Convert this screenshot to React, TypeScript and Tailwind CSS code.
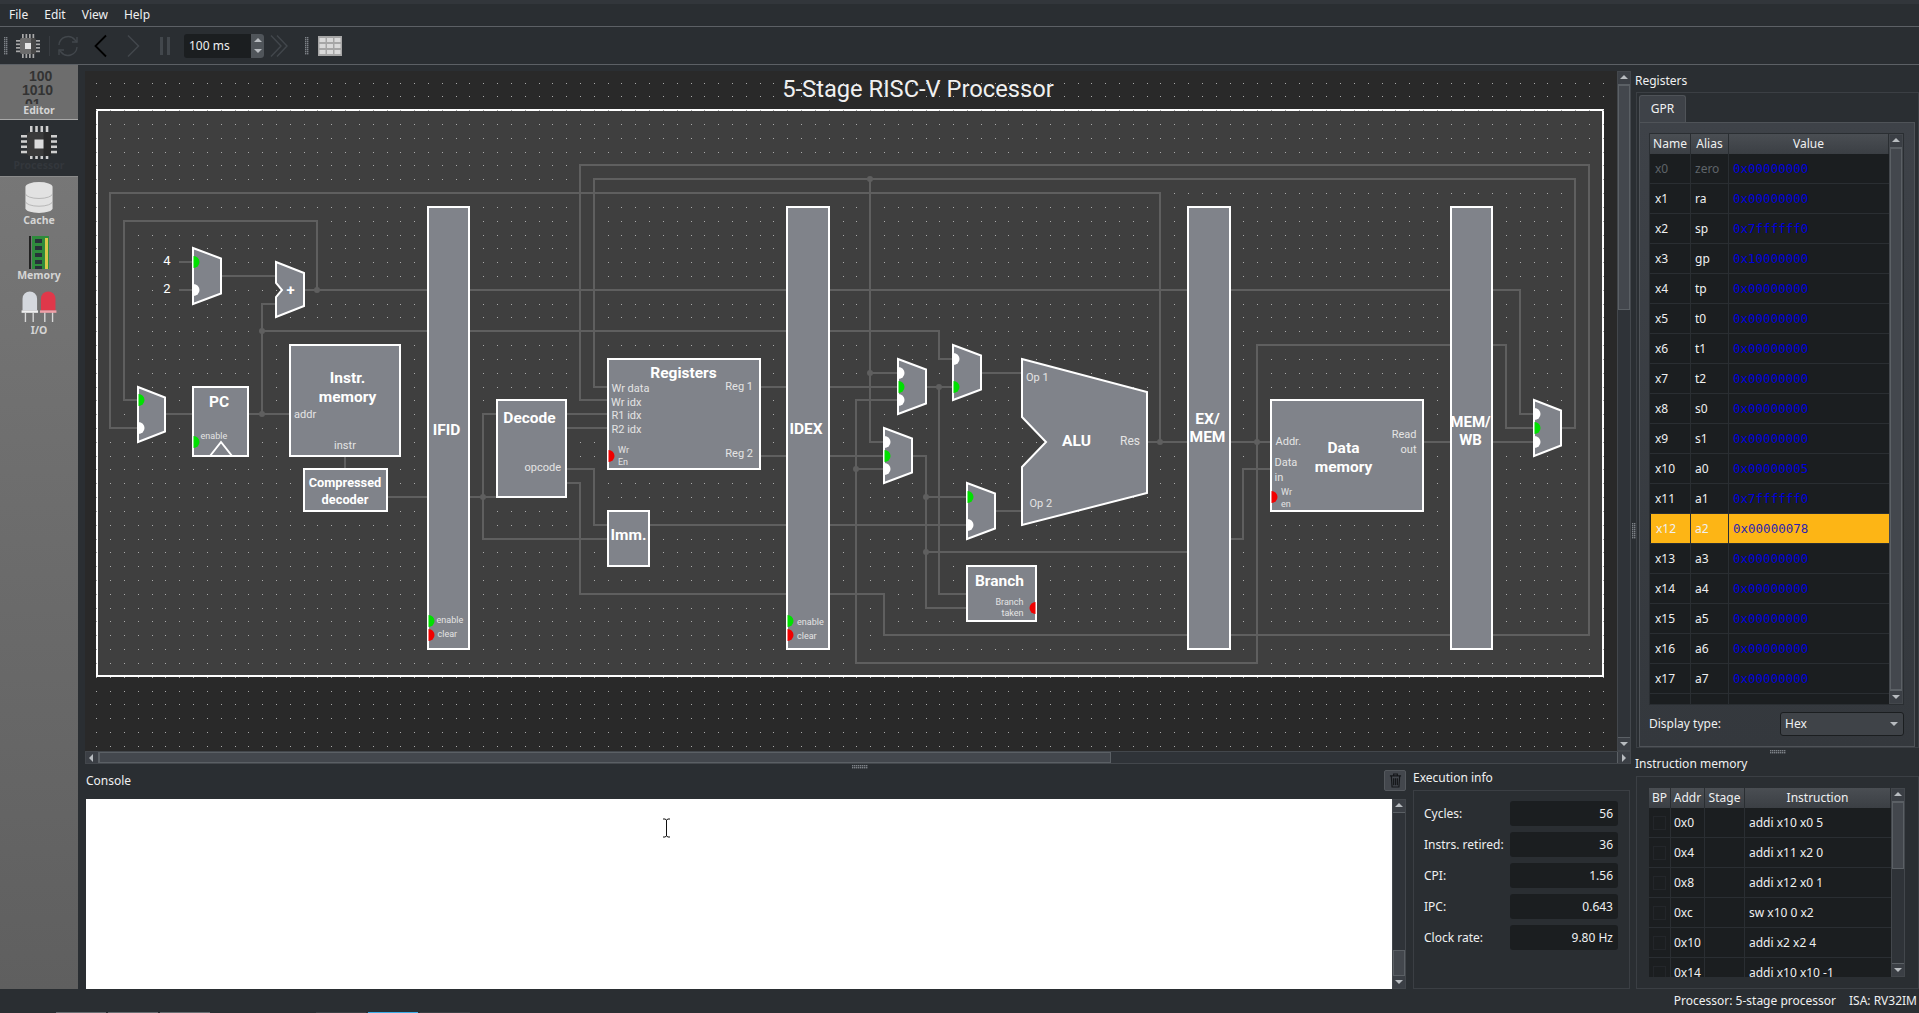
import { ReactNode } from "react";

// grid of the processor diagram, everything in it snaps to this
const X = (j: number) => Math.round(96.3 + 13.82 * j);
const Y = (k: number) => Math.round(82.5 + 13.82 * k);

const WIRE = "#5f5f5f";
const BLOCK = "#80838a";

const wires: number[][][] = [
  [[3, 25], [1, 25], [1, 8], [77, 8], [77, 26]],
  [[3, 23], [2, 23], [2, 10], [16, 10], [16, 15]],
  [[15, 15], [103, 15], [103, 24], [104, 24]],
  [[12, 18], [61, 18], [61, 20], [62, 20]],
  [[13, 16], [12, 16], [12, 24]],
  [[11, 24], [14, 24]],
  [[5, 24], [7, 24]],
  [[9, 14], [13, 14]],
  [[6, 13], [7, 13]],
  [[6, 15], [7, 15]],
  [[18, 27], [18, 28]],
  [[21, 30], [29, 30]],
  [[29, 24], [28, 24], [28, 33], [37, 33]],
  [[34, 24], [37, 24]],
  [[34, 25], [37, 25]],
  [[34, 28], [36, 28], [36, 32], [37, 32]],
  [[34, 29], [35, 29], [35, 37], [57, 37], [57, 40], [108, 40], [108, 6], [35, 6], [35, 23], [37, 23]],
  [[37, 22], [36, 22], [36, 7], [107, 7], [107, 25], [106, 25]],
  [[48, 22], [58, 22]],
  [[48, 27], [57, 27]],
  [[40, 32], [63, 32]],
  [[56, 7], [56, 26], [57, 26]],
  [[56, 21], [58, 21]],
  [[58, 23], [55, 23], [55, 42], [84, 42], [84, 19], [102, 19], [102, 25], [104, 25]],
  [[55, 28], [57, 28]],
  [[60, 22], [62, 22]],
  [[61, 22], [61, 37], [63, 37]],
  [[59, 27], [60, 27], [60, 38], [63, 38]],
  [[60, 30], [63, 30]],
  [[60, 34], [79, 34]],
  [[64, 21], [67, 21]],
  [[65, 31], [67, 31]],
  [[76, 26], [85, 26]],
  [[96, 26], [104, 26]],
  [[82, 33], [83, 33], [83, 28], [85, 28]],
];

const junctions = [
  [16, 15], [12, 18], [12, 24], [28, 30], [56, 7], [56, 21],
  [55, 28], [61, 22], [60, 30], [60, 34], [77, 26], [84, 26],
];

// [j, k, [port rows], green port row]
const muxes: [number, number, number[], number][] = [
  [7, 12, [13, 15], 13],
  [3, 22, [23, 25], 23],
  [58, 20, [21, 22, 23], 22],
  [57, 25, [26, 27, 28], 27],
  [62, 19, [20, 22], 22],
  [63, 29, [30, 32], 30],
  [104, 23, [24, 25, 26], 25],
];

// [j0, k0, j1, k1]
const blocks = [
  [7, 22, 11, 27],
  [14, 19, 22, 27],
  [15, 28, 21, 31],
  [24, 9, 27, 41],
  [29, 23, 34, 30],
  [37, 20, 48, 28],
  [37, 31, 40, 35],
  [50, 9, 53, 41],
  [63, 35, 68, 39],
  [79, 9, 82, 41],
  [85, 23, 96, 31],
  [98, 9, 101, 41],
];

const dotsPath = () => {
  let d = "";
  for (let j = 0; j <= 109; j++) {
    for (let k = 0; k <= 48; k++) {
      d += `M${X(j)} ${Y(k)}h1v1h-1z`;
    }
  }
  return d;
};

function Port({ j, k, color, flip }: { j: number; k: number; color: string; flip?: boolean }) {
  const x = X(j) + (flip ? -0.5 : 0.5);
  const y = Y(k);
  return <path d={`M${x} ${y - 6}A6 6 0 0 ${flip ? 0 : 1} ${x} ${y + 6}Z`} fill={color} />;
}

function T({
  x,
  y,
  size = 11,
  bold,
  anchor = "start",
  fill = "#e4e4e4",
  children,
}: {
  x: number;
  y: number;
  size?: number;
  bold?: boolean;
  anchor?: "start" | "middle" | "end";
  fill?: string;
  children: ReactNode;
}) {
  return (
    <text x={x} y={y + 1} fontSize={size} fontWeight={bold ? 700 : 400} textAnchor={anchor} dominantBaseline="middle" fill={fill}>
      {children}
    </text>
  );
}

const Title = (p: { x: number; y: number; children: ReactNode; size?: number }) => (
  <T x={p.x} y={p.y} size={p.size ?? 15.5} bold anchor="middle" fill="#fff">
    {p.children}
  </T>
);

function Diagram() {
  const white = "#fff";
  return (
    <svg viewBox="85 71 1532 680" className="block w-[1532px] h-[680px] bg-[#292929] font-['Roboto',sans-serif]">
      <rect x="97" y="110" width="1506" height="566" fill="#3f3f3f" stroke="#fff" strokeWidth="2" />
      <path d={dotsPath()} fill="#aaaaaa" shapeRendering="crispEdges" />
      <T x={918} y={90} size={23.7} anchor="middle" fill="#f0f0f0">
        5-Stage RISC-V Processor
      </T>

      {wires.map((w, i) => (
        <polyline key={i} points={w.map(([j, k]) => `${X(j)},${Y(k)}`).join(" ")} fill="none" stroke={WIRE} strokeWidth="2" />
      ))}
      {junctions.map(([j, k]) => (
        <circle key={`${j}-${k}`} cx={X(j)} cy={Y(k)} r="3" fill={WIRE} />
      ))}

      {blocks.map(([a, b, c, d]) => (
        <rect key={`${a}-${b}`} x={X(a)} y={Y(b)} width={X(c) - X(a)} height={Y(d) - Y(b)} fill={BLOCK} stroke={white} strokeWidth="2" />
      ))}
      {muxes.map(([j, k, ports, green]) => (
        <g key={`${j}-${k}`}>
          <polygon
            points={`${X(j)},${Y(k)} ${X(j + 2)},${Y(k) + 10.5} ${X(j + 2)},${Y(k + 4) - 10.5} ${X(j)},${Y(k + 4)}`}
            fill={BLOCK}
            stroke={white}
            strokeWidth="2"
          />
          {ports.map((p) => (
            <Port key={p} j={j} k={p} color={p === green ? "#00e000" : "#fff"} />
          ))}
        </g>
      ))}
      {/* pc adder */}
      <polygon
        points={`${X(13)},${Y(13)} ${X(15)},${Y(13) + 11} ${X(15)},${Y(17) - 11} ${X(13)},${Y(17)} ${X(13)},${Y(15.5)} ${X(13.45)},${Y(15)} ${X(13)},${Y(14.5)}`}
        fill={BLOCK}
        stroke={white}
        strokeWidth="2"
      />
      {/* alu */}
      <polygon
        points={`${X(67)},${Y(20)} ${X(76)},${Y(22.4)} ${X(76)},${Y(29.7)} ${X(67)},${Y(32)} ${X(67)},${Y(27.8)} ${X(68.75)},${Y(26)} ${X(67)},${Y(24.2)}`}
        fill={BLOCK}
        stroke={white}
        strokeWidth="2"
      />
      {/* clock mark of the pc */}
      <polygon points={`${X(9) - 11},${Y(27)} ${X(9)},${Y(26)} ${X(9) + 11},${Y(27)}`} fill="none" stroke={white} strokeWidth="2" />

      <Port j={7} k={26} color="#00e000" />
      <Port j={24} k={39} color="#00e000" />
      <Port j={24} k={40} color="#f00000" />
      <Port j={50} k={39} color="#00e000" />
      <Port j={50} k={40} color="#f00000" />
      <Port j={37} k={27} color="#f00000" />
      <Port j={85} k={30} color="#f00000" />
      <Port j={68} k={38} color="#f00000" flip />

      <T x={167} y={261} size={13} anchor="middle" fill="#fff">4</T>
      <T x={167} y={289} size={13} anchor="middle" fill="#fff">2</T>
      <T x={290.5} y={290} size={15} bold anchor="middle" fill="#fff">+</T>
      <Title x={219} y={402}>PC</Title>
      <T x={200.5} y={435.5} size={9}>enable</T>
      <Title x={347.5} y={378}>Instr.</Title>
      <Title x={347.5} y={397}>memory</Title>
      <T x={294} y={414} size={11}>addr</T>
      <T x={345} y={445} size={11} anchor="middle">instr</T>
      <Title x={345} y={482.5} size={12.8}>Compressed</Title>
      <Title x={345} y={499.5} size={12.8}>decoder</Title>

      <Title x={446.5} y={430}>IFID</Title>
      <T x={436.5} y={620} size={9}>enable</T>
      <T x={437.5} y={634} size={9}>clear</T>

      <Title x={529.5} y={418}>Decode</Title>
      <T x={561} y={467} size={11} anchor="end">opcode</T>

      <Title x={683.5} y={373}>Registers</Title>
      <T x={611.5} y={388}>Wr data</T>
      <T x={611} y={402}>Wr idx</T>
      <T x={611.5} y={415}>R1 idx</T>
      <T x={611.5} y={429}>R2 idx</T>
      <T x={753} y={386} anchor="end">Reg 1</T>
      <T x={753} y={453} anchor="end">Reg 2</T>
      <T x={618} y={450} size={9}>Wr</T>
      <T x={618} y={461.5} size={9}>En</T>

      <Title x={628.5} y={534.5}>Imm.</Title>

      <Title x={806} y={429}>IDEX</Title>
      <T x={797} y={622} size={9}>enable</T>
      <T x={797} y={636} size={9}>clear</T>

      <T x={1026} y={377.5}>Op 1</T>
      <T x={1029.5} y={503.5}>Op 2</T>
      <Title x={1076.5} y={441}>ALU</Title>
      <T x={1140} y={441} size={12} anchor="end">Res</T>

      <Title x={999.5} y={581}>Branch</Title>
      <T x={1023.5} y={601.5} size={9} anchor="end">Branch</T>
      <T x={1023.5} y={612.5} size={9} anchor="end">taken</T>

      <Title x={1207.5} y={419}>EX/</Title>
      <Title x={1207.5} y={437}>MEM</Title>

      <T x={1275.5} y={441.5}>Addr.</T>
      <T x={1274.5} y={462.5}>Data</T>
      <T x={1274.5} y={477}>in</T>
      <T x={1281} y={491.5} size={9}>Wr</T>
      <T x={1281} y={504} size={9}>en</T>
      <Title x={1343.5} y={448}>Data</Title>
      <Title x={1343.5} y={467}>memory</Title>
      <T x={1416.5} y={434.5} anchor="end">Read</T>
      <T x={1416.5} y={449} anchor="end">out</T>

      <Title x={1470.5} y={422} size={15}>MEM/</Title>
      <Title x={1470.5} y={440} size={15}>WB</Title>
    </svg>
  );
}

function Tri({ dir, color = "#b8bcc0" }: { dir: "up" | "down" | "left" | "right"; color?: string }) {
  const pts = { up: "1,6 5,2 9,6", down: "1,3 9,3 5,7", left: "6,1 6,9 2,5", right: "3,1 3,9 7,5" }[dir];
  return (
    <svg viewBox="0 0 10 10" className="w-[10px] h-[10px]">
      <polygon points={pts} fill={color} />
    </svg>
  );
}

function VScroll({ thumb, className }: { thumb: string; className?: string }) {
  return (
    <div className={`flex flex-col w-[14px] shrink-0 bg-[#2f3338] border border-[#43474c] ${className ?? ""}`}>
      <div className="h-[13px] shrink-0 flex items-center justify-center bg-[#3b3f45] border-b border-[#5b6065]">
        <Tri dir="up" />
      </div>
      <div className="flex-1 min-h-0">
        <div className={`bg-[#43474d] border border-[#5b6065] ${thumb}`} />
      </div>
      <div className="h-[13px] shrink-0 flex items-center justify-center bg-[#3b3f45] border-t border-[#5b6065]">
        <Tri dir="down" />
      </div>
    </div>
  );
}

// little dotted grab handle of the splitters and toolbars
function Grip({ cols, rows, color = "#7d8287" }: { cols: number; rows: number; color?: string }) {
  const cells = [];
  for (let c = 0; c < cols; c++) {
    for (let r = 0; r < rows; r++) {
      cells.push(<rect key={`${c}-${r}`} x={c * 2} y={r * 2} width="1.4" height="1.4" fill={color} />);
    }
  }
  return (
    <svg width={cols * 2} height={rows * 2} className="block shrink-0">
      {cells}
    </svg>
  );
}

function Chip({ size, body, legs, core }: { size: number; body: string; legs: string; core: string }) {
  const offs = [6, 9.5, 13, 16.5];
  return (
    <svg width={size} height={size} viewBox="0 0 24 24" className="block">
      {offs.map((o) => (
        <g key={o} fill={legs}>
          <rect x={o} y="0" width="1.7" height="5" />
          <rect x={o} y="19" width="1.7" height="5" />
          <rect x="0" y={o} width="5" height="1.7" />
          <rect x="19" y={o} width="5" height="1.7" />
        </g>
      ))}
      <rect x="4" y="4" width="16" height="16" rx="2" fill={body} />
      <rect x="15" y="4" width="5" height="16" rx="1" fill="#1b1b1b" opacity="0.45" />
      <rect x="9" y="9" width="6" height="6" fill={core} />
    </svg>
  );
}

function ToolbarIcons() {
  const dim = "#42474c";
  return (
    <div className="h-[37px] flex items-center bg-[#2a2e32]">
      <div className="ml-[4px]">
        <Grip cols={2} rows={9} />
      </div>
      <div className="ml-[8px]">
        <Chip size={24} body="#6c6c6c" legs="#a8a8a8" core="#e6e6e6" />
      </div>
      <div className="ml-[9px] w-px h-[20px] bg-[#383c41]" />
      <svg viewBox="0 0 24 24" className="ml-[6px] w-[24px] h-[24px]" fill="none" stroke={dim} strokeWidth="1.4">
        <path d="M3 11a9 9 0 0 1 16-5l2 2M21 13a9 9 0 0 1-16 5l-2-2" />
        <path d="M21 3v5h-5M3 21v-5h5" />
      </svg>
      <svg viewBox="0 0 14 24" className="ml-[14px] w-[14px] h-[24px]" fill="none" stroke="#000" strokeWidth="1.8">
        <path d="M12 1.5 1.5 12 12 22.5" />
      </svg>
      <svg viewBox="0 0 14 24" className="ml-[18px] w-[14px] h-[24px]" fill="none" stroke={dim} strokeWidth="1.5">
        <path d="M2 1.5 12.5 12 2 22.5" />
      </svg>
      <div className="ml-[20px] flex gap-[4px]">
        <div className="w-[3px] h-[18px] bg-[#42474c]" />
        <div className="w-[3px] h-[18px] bg-[#42474c]" />
      </div>
      <div className="ml-[14px] w-[80px] h-[24px] flex bg-[#1b1e20] rounded-[3px] overflow-hidden">
        <span className="flex-1 pl-[5px] text-[12px] leading-[24px] text-[#eff0f1]">100 ms</span>
        <div className="w-[13px] flex flex-col bg-[#50555a] items-center justify-center">
          <Tri dir="up" />
          <Tri dir="down" />
        </div>
      </div>
      <svg viewBox="0 0 20 24" className="ml-[5px] w-[20px] h-[24px]" fill="none" stroke={dim} strokeWidth="1.4">
        <path d="M2 1.5 12 12 2 22.5M8 1.5 18 12 8 22.5" />
      </svg>
      <div className="ml-[16px]">
        <Grip cols={2} rows={9} />
      </div>
      <svg viewBox="0 0 24 20" className="ml-[9px] w-[24px] h-[20px]">
        <rect width="24" height="20" fill="#a6a6a6" />
        {[2, 8, 14].map((y) =>
          [1.5, 9, 16.5].map((x) => <rect key={`${x}-${y}`} x={x} y={y} width="6" height="4" fill="#d9d9d9" />)
        )}
      </svg>
    </div>
  );
}

function SideItem({
  label,
  children,
  className,
  boxClass,
  labelClass,
}: {
  label: string;
  children: ReactNode;
  className?: string;
  boxClass?: string;
  labelClass?: string;
}) {
  return (
    <div className={`flex flex-col items-center overflow-hidden ${className ?? "h-[55px]"}`}>
      <div className={`shrink-0 flex items-start justify-center overflow-hidden ${boxClass ?? "h-[37px]"}`}>{children}</div>
      <span className={`text-[10.5px] leading-[12px] font-bold ${labelClass ?? "text-[#d4d4d4]"}`}>{label}</span>
    </div>
  );
}

function Sidebar() {
  return (
    <div className="w-[78px] shrink-0 flex flex-col bg-gradient-to-b from-[#7a7a7a] to-[#5f5f5f]">
      <SideItem label="Editor" className="h-[55px] bg-[#6d6d6d] border-b border-[#a8a8a8]" boxClass="h-[39px]">
        <div className="w-[78px] h-[39px] pt-[4px] overflow-hidden font-['Liberation_Sans',sans-serif] font-bold text-[14px] leading-[14px] text-[#333]">
          <div className="pl-[29px]">100</div>
          <div className="pl-[22px]">1010</div>
          <div className="pl-[25px]">01</div>
        </div>
      </SideItem>
      <SideItem label="Processor" className="h-[57px] bg-[#2a2e32] border-b border-[#8a8a8a]" boxClass="h-[39px]" labelClass="text-[#33373c]">
        <div className="pt-[6px]">
          <Chip size={36} body="#3a3a3a" legs="#cfcfcf" core="#dcdcdc" />
        </div>
      </SideItem>
      <SideItem label="Cache">
        <svg viewBox="0 0 28 32" className="w-[28px] h-[31px] mt-[5px]">
          <path d="M0 5a14 5 0 0 1 28 0v22a14 5 0 0 1-28 0z" fill="#e2e2e2" />
          <path d="M0 12a14 5 0 0 0 28 0M0 20a14 5 0 0 0 28 0" fill="none" stroke="#aaa" strokeWidth="0.8" />
        </svg>
      </SideItem>
      <SideItem label="Memory">
        <svg viewBox="0 0 20 36" className="w-[20px] h-[36px] mt-[4px]">
          <rect x="0" y="0" width="2" height="36" fill="#222" />
          <rect x="3" y="0" width="17" height="36" fill="#2e8b3c" />
          <rect x="16" y="2" width="3" height="32" fill="#d8c84a" />
          {[3, 10, 17, 24, 30].map((y) => (
            <rect key={y} x="6" y={y} width="7" height="4" fill="#28323a" />
          ))}
        </svg>
      </SideItem>
      <SideItem label="I/O">
        <svg viewBox="0 0 38 32" className="w-[38px] h-[31px] mt-[4px]">
          <path d="M2 20V8a7.5 7.5 0 0 1 15 0v12z" fill="#d4d8de" />
          <rect x="1" y="20" width="17" height="2.5" fill="#f0f0f0" />
          <path d="M5 22v10M13 22v10M25 22v10M33 22v10" stroke="#d8d8d8" strokeWidth="1.4" />
          <path d="M21 20V8a7.5 7.5 0 0 1 15 0v12z" fill="#e0384a" />
          <rect x="20" y="20" width="17" height="2.5" fill="#f0a0a8" />
        </svg>
      </SideItem>
    </div>
  );
}

const registers: [string, string, string][] = [
  ["x0", "zero", "0x00000000"],
  ["x1", "ra", "0x00000000"],
  ["x2", "sp", "0x7ffffff0"],
  ["x3", "gp", "0x10000000"],
  ["x4", "tp", "0x00000000"],
  ["x5", "t0", "0x00000000"],
  ["x6", "t1", "0x00000000"],
  ["x7", "t2", "0x00000000"],
  ["x8", "s0", "0x00000000"],
  ["x9", "s1", "0x00000000"],
  ["x10", "a0", "0x00000005"],
  ["x11", "a1", "0x7ffffff0"],
  ["x12", "a2", "0x00000078"],
  ["x13", "a3", "0x00000000"],
  ["x14", "a4", "0x00000000"],
  ["x15", "a5", "0x00000000"],
  ["x16", "a6", "0x00000000"],
  ["x17", "a7", "0x00000000"],
  ["", "", ""],
];

const program = [
  ["0x0", "addi x10 x0 5"],
  ["0x4", "addi x11 x2 0"],
  ["0x8", "addi x12 x0 1"],
  ["0xc", "sw x10 0 x2"],
  ["0x10", "addi x2 x2 4"],
  ["0x14", "addi x10 x10 -1"],
];

const stats = [
  ["Cycles:", "56"],
  ["Instrs. retired:", "36"],
  ["CPI:", "1.56"],
  ["IPC:", "0.643"],
  ["Clock rate:", "9.80 Hz"],
];

function HeadCell({ children, className }: { children: ReactNode; className?: string }) {
  return (
    <div className={`h-[20px] flex items-center justify-center bg-gradient-to-b from-[#4a4e53] to-[#3b3f44] border-r border-[#2a2e32] text-[12px] text-[#eff0f1] ${className ?? ""}`}>
      {children}
    </div>
  );
}

function RegisterPanel() {
  return (
    <div className="h-[656px] border border-[#3b3f44] pl-[2px] pr-[3px] pt-[2px] flex flex-col">
      <div className="w-[47px] h-[27px] shrink-0 bg-[#3e4248] border border-b-0 border-[#4f5358] rounded-t-[3px] flex items-center justify-center text-[12px] text-[#eff0f1]">
        GPR
      </div>
      <div className="flex-1 flex flex-col min-h-0 bg-gradient-to-b from-[#3e4248] to-[#34383d] border border-[#4f5358] pl-[9px] pr-[10px] pt-[10px]">
        <div className="h-[572px] flex border border-[#2a2e32] overflow-hidden">
          <div className="flex-1 flex flex-col min-w-0 bg-[#1b1e20]">
            <div className="grid grid-cols-[41px_38px_1fr] shrink-0">
              <HeadCell>Name</HeadCell>
              <HeadCell>Alias</HeadCell>
              <HeadCell>Value</HeadCell>
            </div>
            {registers.map(([name, alias, value], i) => (
              <div
                key={i}
                className={`grid grid-cols-[41px_38px_1fr] h-[30px] shrink-0 text-[12px] leading-[29px] border-b border-[#2a2e32] ${name === "x0" ? "text-[#5f6469]" : "text-[#eff0f1]"}`}
              >
                <span className={`pl-[5px] border-r border-[#2a2e32] ${name === "x12" ? "bg-[#fdb515] ml-[1px] pl-[4px]" : ""}`}>{name}</span>
                <span className={`pl-[4px] border-r border-[#2a2e32] ${name === "x12" ? "bg-[#fdb515]" : ""}`}>{alias}</span>
                <span
                  className={`pl-[4px] font-['DejaVu_Sans_Mono',monospace] text-[12.5px] ${name === "x12" ? "bg-[#fdb515] text-[#2d1fb0]" : "text-[#0000dd]"}`}
                >
                  {value}
                </span>
              </div>
            ))}
          </div>
          <VScroll thumb="h-full" />
        </div>
        <div className="h-[24px] mt-[7px] flex items-center justify-between">
          <span className="text-[12px] text-[#eff0f1]">Display type:</span>
          <div className="w-[124px] h-[24px] flex items-center justify-between px-[4px] bg-[#3f4348] border border-[#1b1e20] rounded-[3px] text-[12px] text-[#eff0f1]">
            Hex
            <Tri dir="down" />
          </div>
        </div>
      </div>
    </div>
  );
}

function InstructionPanel() {
  return (
    <div className="h-[213px] border border-[#3b3f44] pl-[11px] pr-[12px] pt-[10px]">
      <div className="h-[191px] flex border border-[#2a2e32] overflow-hidden">
        <div className="flex-1 min-w-0 flex flex-col bg-[#1b1e20]">
          <div className="grid grid-cols-[22px_34px_40px_1fr] shrink-0">
            <HeadCell>BP</HeadCell>
            <HeadCell>Addr</HeadCell>
            <HeadCell>Stage</HeadCell>
            <HeadCell>Instruction</HeadCell>
          </div>
          {program.map(([addr, instr]) => (
            <div key={addr} className="grid grid-cols-[22px_34px_40px_1fr] h-[30px] shrink-0 text-[12px] leading-[29px] text-[#eff0f1] border-b border-[#2a2e32]">
              <span className="border-r border-[#2a2e32] flex items-center justify-center">
                <span className="w-[13px] h-[14px] border border-[#23262a]" />
              </span>
              <span className="pl-[3px] border-r border-[#2a2e32]">{addr}</span>
              <span className="border-r border-[#2a2e32]" />
              <span className="pl-[4px]">{instr}</span>
            </div>
          ))}
        </div>
        <VScroll thumb="h-[67px]" />
      </div>
    </div>
  );
}

export default function App() {
  return (
    <div className="w-[1919px] h-[1013px] flex flex-col overflow-hidden bg-[#2a2e32] text-[#eff0f1] font-['Noto_Sans',sans-serif]">
      <div className="h-[4px] shrink-0 bg-[#32363b]" />
      <div className="h-[22px] shrink-0 flex items-center text-[12px] pl-[9px] gap-[16px]">
        <span>File</span>
        <span>Edit</span>
        <span>View</span>
        <span>Help</span>
      </div>
      <div className="h-px shrink-0 bg-[#5c6065]" />
      <ToolbarIcons />
      <div className="h-px shrink-0 bg-[#5c6065]" />

      <div className="h-[924px] flex">
        <Sidebar />

        <div className="w-[1553px] shrink-0 pl-[7px] pt-[6px] flex flex-col">
          <div className="h-[680px] flex">
            <Diagram />
            <VScroll thumb="h-[225px]" className="w-[14px]" />
          </div>
          <div className="h-[13px] w-[1546px] flex bg-[#2f3338] border border-[#43474c]">
            <div className="w-[13px] shrink-0 flex items-center justify-center bg-[#3b3f45] border-r border-[#5b6065]">
              <Tri dir="left" />
            </div>
            <div className="w-[1012px] bg-[#43474d] border border-[#5b6065]" />
            <div className="flex-1" />
            <div className="w-[13px] shrink-0 flex items-center justify-center bg-[#3b3f45] border-l border-[#5b6065]">
              <Tri dir="right" />
            </div>
          </div>
          <div className="h-[5px] flex justify-center items-center pl-[4px]">
            <Grip cols={8} rows={2} />
          </div>

          <div className="h-[220px] flex">
            <div className="w-[1321px] shrink-0 flex flex-col">
              <div className="h-[30px] flex items-start justify-between text-[12px]">
                <span className="pl-px pt-[3px]">Console</span>
                <div className="w-[22px] h-[21px] mt-[1px] flex items-center justify-center bg-[#43474d] border border-[#54585d] rounded-[2px]">
                  <svg viewBox="0 0 14 16" className="w-[13px] h-[15px]" fill="none" stroke="#15171a" strokeWidth="1.3">
                    <path d="M1 3h12M5 3V1h4v2M2.5 3l.8 12h7.4l.8-12M5 5.5v7.5M7 5.5v7.5M9 5.5v7.5" />
                  </svg>
                </div>
              </div>
              <div className="h-[190px] flex pl-px">
                <div className="flex-1 bg-white relative">
                  {/* mouse pointer over the console */}
                  <svg viewBox="0 0 9 20" className="absolute left-[576px] top-[19px] w-[9px] h-[20px]" fill="none" stroke="#111" strokeWidth="1">
                    <path d="M1 1h2l1.5 1L6 1h2M4.5 2v16M1 19h2l1.5-1L6 19h2" />
                  </svg>
                </div>
                <VScroll thumb="mt-[137px] h-[26px]" />
              </div>
            </div>
            <div className="w-[218px] ml-[6px] shrink-0 flex flex-col">
              <div className="h-[21px] shrink-0 pl-px text-[12px] leading-[18px]">Execution info</div>
              <div className="h-[199px] ml-px border border-[#3b3f44] pl-[10px] pt-[10px] flex flex-col gap-[6px]">
                {stats.map(([label, value]) => (
                  <div key={label} className="flex items-center h-[25px] text-[12px]">
                    <span className="w-[86px] shrink-0 whitespace-nowrap">{label}</span>
                    <span className="w-[108px] h-[25px] leading-[25px] pr-[5px] text-right bg-[#1b1e20] rounded-[3px]">{value}</span>
                  </div>
                ))}
              </div>
            </div>
          </div>
        </div>

        <div className="w-[5px] shrink-0 flex items-center justify-center pt-[8px]">
          <Grip cols={2} rows={8} />
        </div>

        <div className="w-[283px] shrink-0 pt-[7px] flex flex-col">
          <div className="h-[20px] -ml-px text-[12px] leading-[18px]">Registers</div>
          <RegisterPanel />
          <div className="h-[8px] flex items-center justify-center">
            <Grip cols={8} rows={2} />
          </div>
          <div className="h-[20px] -ml-px text-[12px] leading-[16px]">Instruction memory</div>
          <InstructionPanel />
        </div>
      </div>

      <div className="h-[23px] shrink-0 flex items-center justify-end text-[12px] pr-[2px]">
        <span>Processor: 5-stage processor</span>
        <span className="ml-[13px]">ISA: RV32IM</span>
      </div>
      <div className="h-px shrink-0 flex">
        <div className="ml-[56px] w-[50px] bg-[#6a6e73]" />
        <div className="ml-[2px] w-[50px] bg-[#6a6e73]" />
        <div className="ml-[2px] w-[50px] bg-[#6a6e73]" />
        <div className="ml-[106px] w-[50px] bg-[#3b3f44]" />
        <div className="ml-[2px] w-[50px] bg-[#3daee9]" />
        <div className="ml-[2px] w-[50px] bg-[#3b3f44]" />
      </div>
    </div>
  );
}
